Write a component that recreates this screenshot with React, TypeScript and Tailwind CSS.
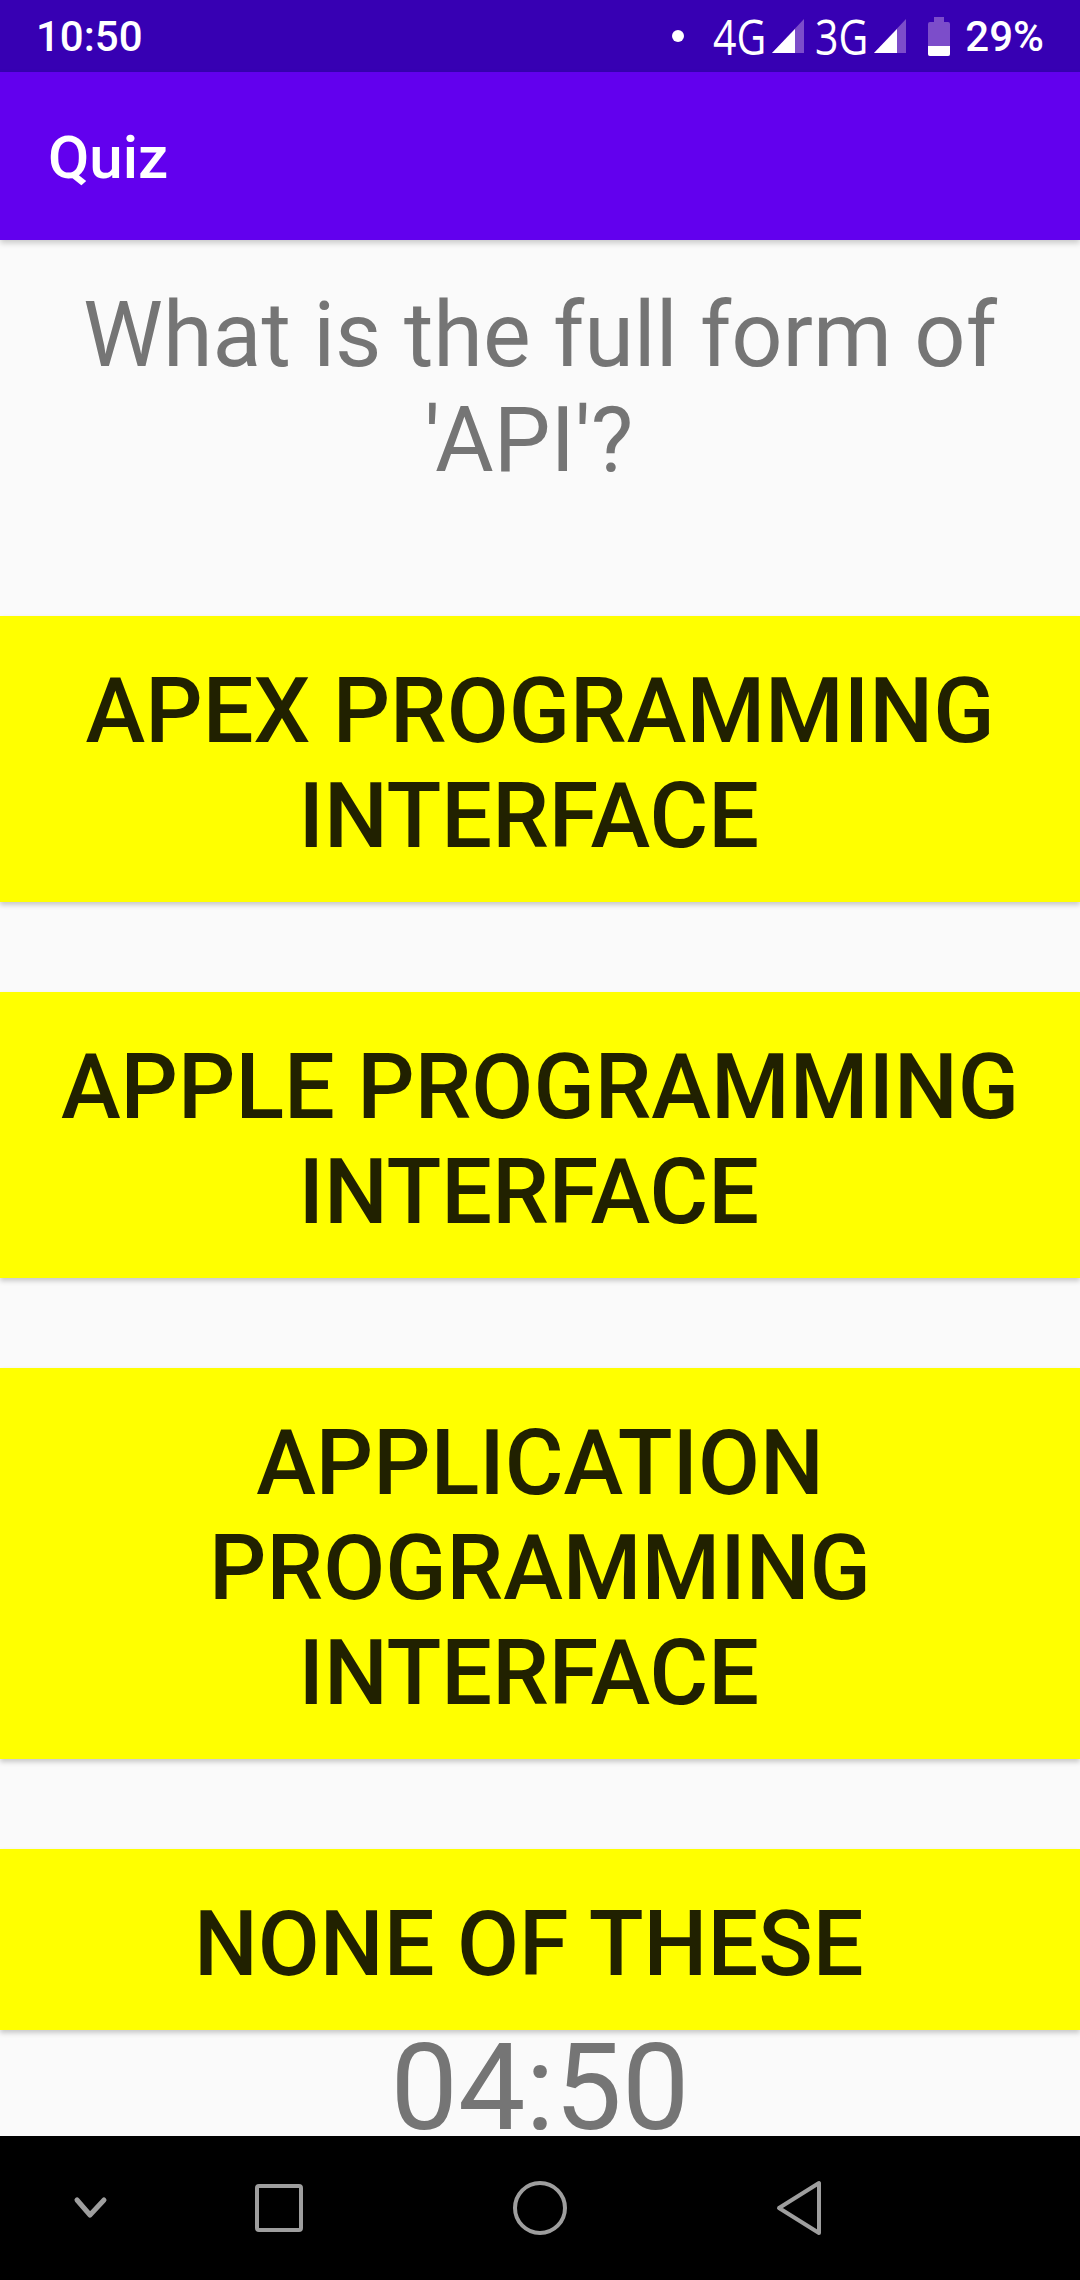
const answers = [
  'APEX PROGRAMMING INTERFACE\u00a0',
  'APPLE PROGRAMMING INTERFACE\u00a0',
  'APPLICATION PROGRAMMING INTERFACE\u00a0',
  'NONE OF THESE\u00a0',
];

const SignalIcon = () => (
  <svg width="34" height="36" viewBox="0 0 34 36" className="ml-[10px] shrink-0">
    <path d="M33 1 L33 35 L1 35 Z" fill="#7c4dca" />
    <path d="M24 11 L24 35 L1 35 Z" fill="#ffffff" />
  </svg>
);

const NetworkLabel = ({ label }: { label: string }) => (
  <span className="inline-block w-[48px] shrink-0 origin-left scale-x-[0.82] text-[50px] leading-[36px] font-normal whitespace-nowrap text-white font-['Open_Sans',sans-serif]">
    {label}
  </span>
);

const StatusBar = () => (
  <div className="flex h-[72px] shrink-0 items-center bg-[#3700b3] pr-[36px] pl-[36px] text-[42px] font-medium text-white">
    <span>10:50</span>
    <div className="ml-auto flex items-center">
      <span className="mr-[29px] size-3 rounded-full bg-white" />
      <NetworkLabel label="4G" />
      <SignalIcon />
      <div className="w-[10px]" />
      <NetworkLabel label="3G" />
      <SignalIcon />
      <svg width="22" height="39" viewBox="0 0 22 39" className="mr-[15px] ml-[21px] shrink-0">
        <path d="M6 0 H16 V5 H20 Q22 5 22 7 V37 Q22 39 20 39 H2 Q0 39 0 37 V7 Q0 5 2 5 H6 Z" fill="#7c4dca" />
        <path d="M0 29 H22 V37 Q22 39 20 39 H2 Q0 39 0 37 Z" fill="#ffffff" />
      </svg>
      <span>29%</span>
    </div>
  </div>
);

const NavBar = () => (
  <div className="flex h-[144px] shrink-0 items-center bg-black">
    <svg width="1080" height="144" viewBox="0 0 1080 144" fill="none" stroke="#9e9e9e" strokeWidth="4">
      <path d="M77 64 L90 79 L104 64" strokeWidth="5" strokeLinecap="round" strokeLinejoin="round" />
      <rect x="257" y="50" width="44" height="44" rx="2" />
      <circle cx="540" cy="72" r="25" />
      <path d="M819 47 L819 97 L779 72 Z" strokeLinejoin="round" />
    </svg>
  </div>
);

export default function App() {
  return (
    <div className="flex h-[2280px] w-[1080px] flex-col overflow-hidden bg-[#fafafa] font-['Roboto',sans-serif]">
      <StatusBar />
      <div className="flex h-[168px] shrink-0 items-center bg-[#6200ee] pt-[3px] pl-[48px] text-[60px] font-medium text-white shadow-[0_3px_6px_rgba(0,0,0,0.2)]">
        Quiz
      </div>

      <div className="flex min-h-0 flex-1 flex-col">
        <div className="h-[376px] shrink-0 pt-[43px] text-center text-[90px] leading-[105px] text-[#757575]">
          What is the full form of 'API'?&nbsp;
        </div>

        <div className="flex flex-col gap-[90px]">
          {answers.map((answer) => (
            <div
              key={answer}
              className="bg-[#ffff00] px-[12px] pt-[43px] pb-[33px] text-center text-[90px] leading-[105px] font-medium text-[#000000de] shadow-[0_3px_5px_rgba(0,0,0,0.2)]"
            >
              {answer}
            </div>
          ))}
        </div>

        <div className="h-[106px] text-center text-[120px] leading-[116px] text-[#757575]">04:50</div>
      </div>

      <NavBar />
    </div>
  );
}
